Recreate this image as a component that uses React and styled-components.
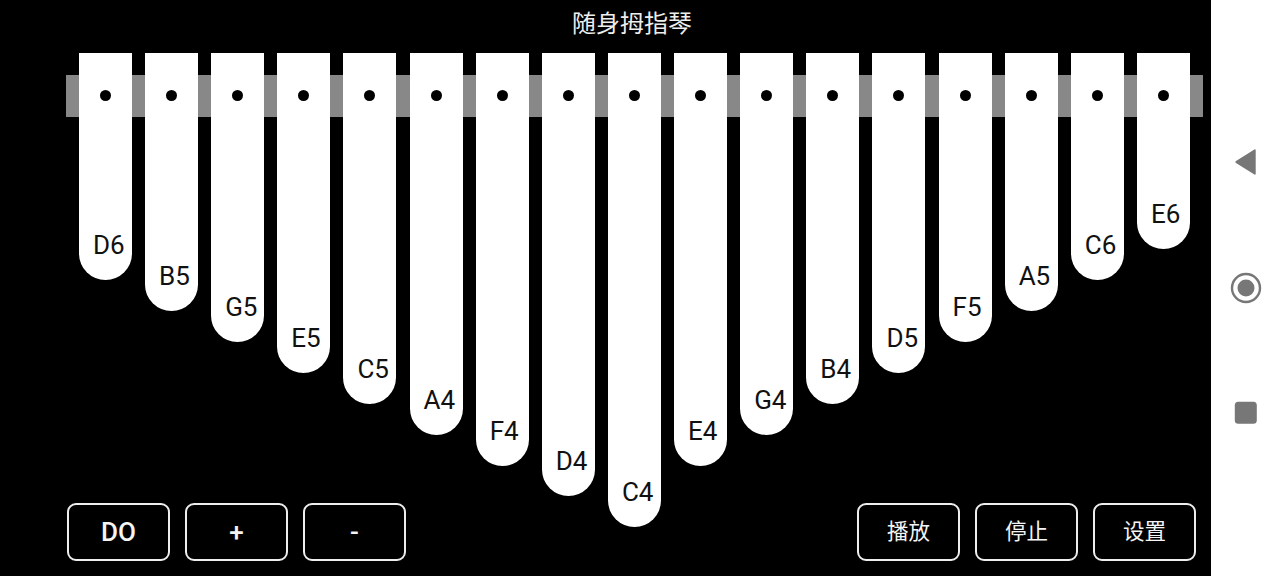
import React from "react";
import styled, { createGlobalStyle } from "styled-components";

const KEYS = [
  { note: "D6", length: 227 },
  { note: "B5", length: 258 },
  { note: "G5", length: 289 },
  { note: "E5", length: 320 },
  { note: "C5", length: 351 },
  { note: "A4", length: 382 },
  { note: "F4", length: 413 },
  { note: "D4", length: 443 },
  { note: "C4", length: 474 },
  { note: "E4", length: 413 },
  { note: "G4", length: 382 },
  { note: "B4", length: 351 },
  { note: "D5", length: 320 },
  { note: "F5", length: 289 },
  { note: "A5", length: 258 },
  { note: "C6", length: 227 },
  { note: "E6", length: 196 },
];

export default function App() {
  return (
    <Screen>
      <GlobalStyle />
      <Stage>
        <Title>随身拇指琴</Title>
        <Body>
          <Keyboard>
            <Bridge />
            {KEYS.map((key) => (
              <Key key={key.note} $length={key.length}>
                <Pin />
                <Note>{key.note}</Note>
              </Key>
            ))}
          </Keyboard>
          <Controls>
            <ButtonGroup>
              <Button $bold>DO</Button>
              <Button $bold>+</Button>
              <Button $bold>-</Button>
            </ButtonGroup>
            <ButtonGroup>
              <Button>播放</Button>
              <Button>停止</Button>
              <Button>设置</Button>
            </ButtonGroup>
          </Controls>
        </Body>
      </Stage>
      <NavBar>
        <NavIcon viewBox="0 0 32 32">
          <path d="M25.7 4.2v23.6c0 .9-.6 1.2-1.3.8L6 17c-.8-.5-.8-1.5 0-2L24.4 3.4c.7-.4 1.3-.1 1.3.8z" />
        </NavIcon>
        <NavIcon viewBox="0 0 32 32">
          <circle cx="16" cy="16" r="14" fill="none" stroke="#777" strokeWidth="2.4" />
          <circle cx="16" cy="16" r="8.5" />
        </NavIcon>
        <NavIcon viewBox="0 0 32 32">
          <rect x="4.8" y="3.8" width="22" height="22" rx="3.5" />
        </NavIcon>
      </NavBar>
    </Screen>
  );
}

const GlobalStyle = createGlobalStyle`
  html, body {
    margin: 0;
    padding: 0;
    background: #000;
  }
`;

const Screen = styled.div`
  display: flex;
  width: 1280px;
  height: 576px;
  overflow: hidden;
  font-family: Roboto, "Noto Sans CJK SC", sans-serif;
`;

const Stage = styled.div`
  display: flex;
  flex-direction: column;
  width: 1211px;
  background: #000;
`;

const Title = styled.h1`
  height: 53px;
  margin: 0;
  padding: 5px 0 0 53px;
  box-sizing: border-box;
  color: #eee;
  font-size: 24px;
  font-weight: 400;
  line-height: 38px;
  text-align: center;
`;

const Body = styled.div`
  display: grid;
  flex: 1;
  & > * {
    grid-area: 1 / 1;
  }
`;

const Keyboard = styled.div`
  position: relative;
  display: flex;
  align-items: flex-start;
  justify-content: space-between;
  height: 474px;
  padding: 0 21.1px 0 78.9px;
`;

const Bridge = styled.div`
  position: absolute;
  top: 22px;
  left: 66px;
  width: 1137px;
  height: 42px;
  background: #888;
`;

const Key = styled.div`
  position: relative;
  display: flex;
  flex-direction: column;
  align-items: center;
  justify-content: space-between;
  width: 53px;
  height: ${(p) => p.$length}px;
  padding: 37px 0 17px;
  box-sizing: border-box;
  background: #fff;
  border-radius: 0 0 26.5px 26.5px;
`;

const Pin = styled.span`
  width: 11px;
  height: 11px;
  border-radius: 50%;
  background: #000;
`;

const Note = styled.span`
  align-self: flex-start;
  padding-left: 14px;
  color: #111;
  font-size: 26px;
  line-height: 36px;
`;

const Controls = styled.div`
  position: relative;
  display: flex;
  align-self: end;
  justify-content: space-between;
  padding: 0 15px 15px 67px;
`;

const ButtonGroup = styled.div`
  display: flex;
  gap: 15px;
`;

const Button = styled.button`
  width: 103px;
  height: 58px;
  padding: 0;
  box-sizing: border-box;
  border: 2px solid #eee;
  border-radius: 9px;
  background: #000;
  color: #f4f4f4;
  font-family: inherit;
  font-size: ${(p) => (p.$bold ? 26 : 21.5)}px;
  font-weight: ${(p) => (p.$bold ? 500 : 400)};
  line-height: 1;
`;

const NavBar = styled.nav`
  display: flex;
  flex: 1;
  flex-direction: column;
  align-items: center;
  justify-content: center;
  gap: 94px;
  background: #fff;
`;

const NavIcon = styled.svg`
  width: 32px;
  height: 32px;
  fill: #777;
`;
